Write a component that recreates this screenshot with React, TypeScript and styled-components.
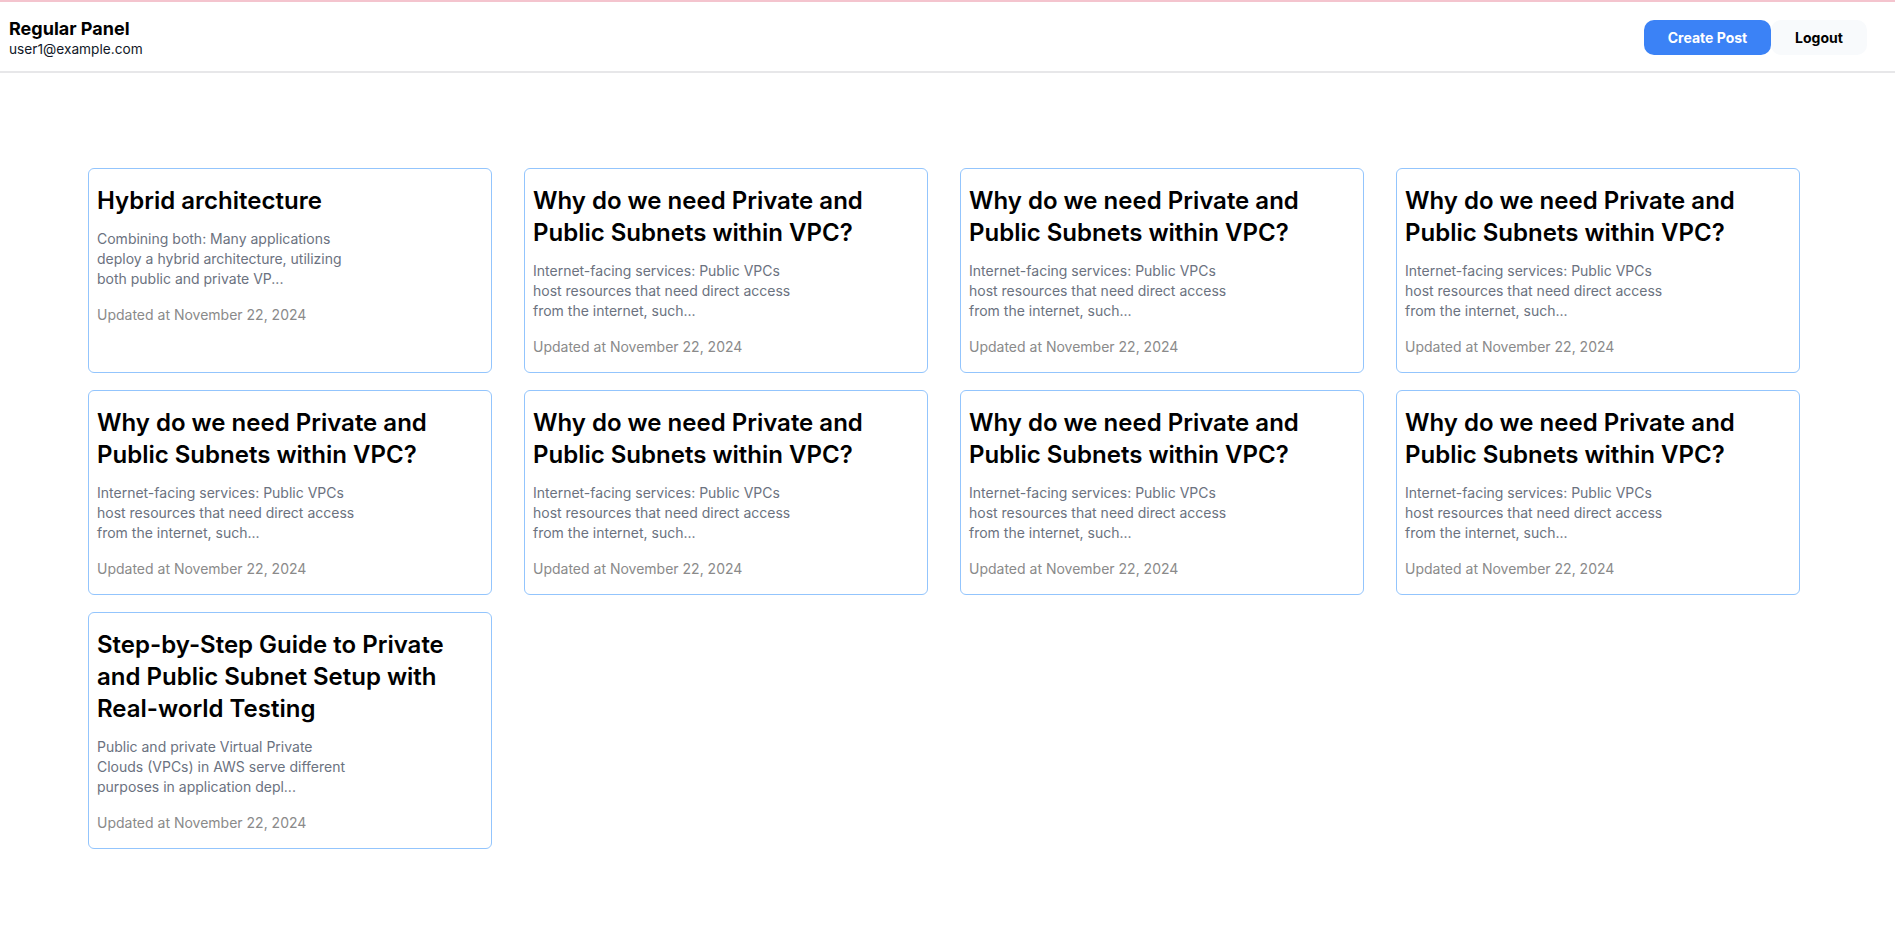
import React from "react";
import styled, { createGlobalStyle } from "styled-components";

type PostType = {
    id: number;
    title: string;
    excerpt: string;
    updatedAt: string;
};

const vpcText =
    "Internet-facing services: Public VPCs host resources that need direct access from the internet, such...";
const vpcTitle = "Why do we need Private and Public Subnets within VPC?";

const posts: PostType[] = [
    {
        id: 1,
        title: "Hybrid architecture",
        excerpt:
            "Combining both: Many applications deploy a hybrid architecture, utilizing both public and private VP...",
        updatedAt: "November 22, 2024",
    },
    ...[2, 3, 4, 5, 6, 7, 8].map((id) => ({
        id,
        title: vpcTitle,
        excerpt: vpcText,
        updatedAt: "November 22, 2024",
    })),
    {
        id: 9,
        title: "Step-by-Step Guide to Private and Public Subnet Setup with Real-world Testing",
        excerpt:
            "Public and private Virtual Private Clouds (VPCs) in AWS serve different purposes in application depl...",
        updatedAt: "November 22, 2024",
    },
];

const GlobalStyle = createGlobalStyle`
    * {
        box-sizing: border-box;
    }
    body {
        margin: 0;
        background: #ffffff;
        font-family: Inter, "Noto Sans", sans-serif;
        color: #000000;
        border-top: 2px solid #f4c4ce;
    }
`;

const Header = styled.header`
    height: 71px;
    display: flex;
    align-items: center;
    justify-content: space-between;
    padding: 0 28px 0 9px;
    border-bottom: 2px solid #e7e7e9;
`;

const UserInfo = styled.div`
    display: flex;
    flex-direction: column;
    margin-top: 2px;
`;

const PanelTitle = styled.h1`
    margin: 0;
    font-size: 18px;
    line-height: 22px;
    font-weight: 700;
`;

const Email = styled.span`
    font-size: 13.7px;
    line-height: 18px;
    color: #111827;
`;

const Actions = styled.div`
    display: flex;
    align-items: center;
    margin-top: 1px;
`;

const Button = styled.button<{ $primary?: boolean }>`
    height: 35px;
    width: ${(props) => (props.$primary ? "127px" : "96px")};
    border: none;
    border-radius: 10px;
    font-family: Inter, "Noto Sans", sans-serif;
    font-size: 14px;
    font-weight: 700;
    cursor: pointer;
    background: ${(props) => (props.$primary ? "#3b82f6" : "#f8fafc")};
    color: ${(props) => (props.$primary ? "#ffffff" : "#000000")};
`;

const Main = styled.main`
    padding: 95px 0 40px 88px;
`;

const Grid = styled.div`
    display: grid;
    grid-template-columns: repeat(4, 404px);
    column-gap: 32px;
    row-gap: 17px;
`;

const Card = styled.article`
    border: 1px solid #93c5fd;
    border-radius: 6px;
    padding: 16px 8px 15px 8px;
`;

const Title = styled.h2`
    margin: 0;
    font-size: 24px;
    line-height: 32px;
    font-weight: 600;
`;

const Excerpt = styled.p`
    margin: 12px 0 0 0;
    max-width: 258px;
    font-size: 14px;
    line-height: 20px;
    color: #6b7280;
`;

const Updated = styled.p`
    margin: 16px 0 0 0;
    font-size: 14px;
    line-height: 20px;
    color: #8a8a8a;
`;

export default function App() {
    return (
        <>
            <GlobalStyle />
            <Header>
                <UserInfo>
                    <PanelTitle>Regular Panel</PanelTitle>
                    <Email>user1@example.com</Email>
                </UserInfo>
                <Actions>
                    <Button $primary>Create Post</Button>
                    <Button>Logout</Button>
                </Actions>
            </Header>
            <Main>
                <Grid>
                    {posts.map((post) => (
                        <Card key={post.id}>
                            <Title>{post.title}</Title>
                            <Excerpt>{post.excerpt}</Excerpt>
                            <Updated>Updated at {post.updatedAt}</Updated>
                        </Card>
                    ))}
                </Grid>
            </Main>
        </>
    );
}
